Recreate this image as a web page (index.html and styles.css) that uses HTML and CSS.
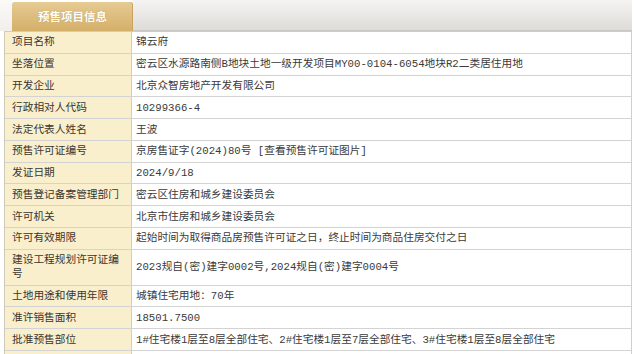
FILE: index.html
```html
<!DOCTYPE html>
<html lang="zh-CN">
<head>
<meta charset="utf-8">
<title>预售项目信息</title>
<link rel="stylesheet" href="styles.css">
</head>
<body>
<div class="page">
  <div class="tabs">
    <div class="tab-lead"></div>
    <div class="tab">预售项目信息</div>
    <div class="tab-fill"></div>
  </div>
  <div class="info">
    <div class="row"><div class="label">项目名称</div><div class="value">锦云府</div></div>
    <div class="row"><div class="label">坐落位置</div><div class="value">密云区水源路南侧B地块土地一级开发项目MY00-0104-6054地块R2二类居住用地</div></div>
    <div class="row"><div class="label">开发企业</div><div class="value">北京众智房地产开发有限公司</div></div>
    <div class="row"><div class="label">行政相对人代码</div><div class="value">10299366-4</div></div>
    <div class="row"><div class="label">法定代表人姓名</div><div class="value">王波</div></div>
    <div class="row"><div class="label">预售许可证编号</div><div class="value">京房售证字(2024)80号 [查看预售许可证图片]</div></div>
    <div class="row"><div class="label">发证日期</div><div class="value">2024/9/18</div></div>
    <div class="row"><div class="label">预售登记备案管理部门</div><div class="value">密云区住房和城乡建设委员会</div></div>
    <div class="row"><div class="label">许可机关</div><div class="value">北京市住房和城乡建设委员会</div></div>
    <div class="row"><div class="label">许可有效期限</div><div class="value">起始时间为取得商品房预售许可证之日，终止时间为商品住房交付之日</div></div>
    <div class="row"><div class="label">建设工程规划许可证编<br>号</div><div class="value">2023规自(密)建字0002号,2024规自(密)建字0004号</div></div>
    <div class="row"><div class="label">土地用途和使用年限</div><div class="value">城镇住宅用地：70年</div></div>
    <div class="row"><div class="label">准许销售面积</div><div class="value">18501.7500</div></div>
    <div class="row"><div class="label">批准预售部位</div><div class="value">1#住宅楼1层至8层全部住宅、2#住宅楼1层至7层全部住宅、3#住宅楼1层至8层全部住宅</div></div>
    <div class="row"><div class="label">&nbsp;</div><div class="value">&nbsp;</div></div>
  </div>
</div>
</body>
</html>
```
FILE: styles.css
```css
html, body {
  margin: 0;
  padding: 0;
  background: #ffffff;
  overflow: hidden;
}

.page {
  width: 640px;
  height: 354px;
  overflow: hidden;
  font-family: "Liberation Mono", "Noto Sans CJK SC", monospace;
  font-size: 10.7px;
  color: #3a3a3a;
}

.tabs {
  display: flex;
  width: 632px;
  height: 31px;
}

.tab-lead {
  width: 12px;
  background: linear-gradient(#fbfaf7, #f1efea);
}

.tab {
  width: 121px;
  margin-top: 2px;
  border-radius: 3px 3px 0 0;
  background: linear-gradient(#e6cb93, #d4af69);
  box-shadow: inset -1px 0 0 #c9a35f;
  color: #ffffff;
  font-family: "Noto Sans CJK SC", sans-serif;
  font-weight: bold;
  font-size: 11.5px;
  line-height: 29px;
  text-align: center;
  text-shadow: 0 0 1px #b48d4b;
}

.tab-fill {
  flex: 1;
  background: linear-gradient(#f5f4f2, #dedcd8);
  border-bottom: 1px solid #cbc9c4;
}

.info {
  margin-left: 4px;
  width: 628px;
  box-sizing: border-box;
  border-left: 1px solid #cfc9b8;
  border-right: 1px solid #cfcfcf;
  border-top: 1px solid #d2ccbc;
}

.row {
  display: grid;
  grid-template-columns: 127px 1fr;
  border-bottom: 1px solid #d3d3d3;
}

.label {
  background: #f9efcd;
  border-right: 1px solid #d3cdbc;
  padding: 3.4px 4px 3.4px 7px;
  line-height: 14px;
  color: #3a3630;
}

.value {
  padding: 3.4px 6px 3.4px 4px;
  line-height: 14px;
  display: flex;
  align-items: center;
  white-space: nowrap;
}
```
